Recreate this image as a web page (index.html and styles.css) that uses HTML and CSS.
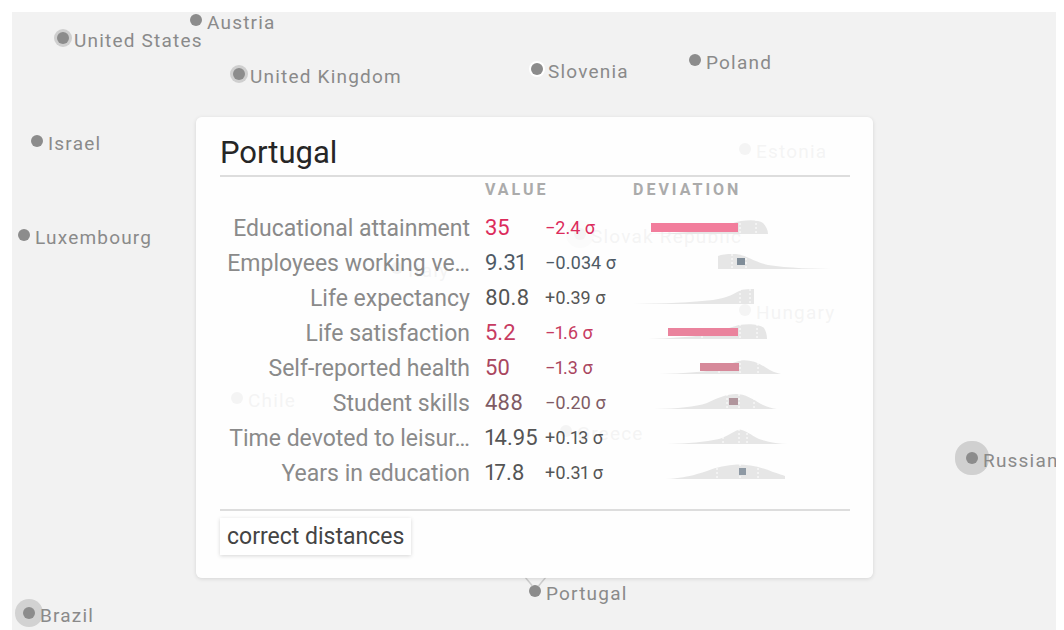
FILE: index.html
```html
<!DOCTYPE html>
<html lang="en">
<head>
<meta charset="utf-8">
<title>Portugal</title>
<link rel="stylesheet" href="styles.css">
</head>
<body>
<div class="page">
  <div class="map">
    <div class="pin" style="left:184px;top:8px"><span class="dot"></span><span class="name">Austria</span></div>
    <div class="pin" style="left:51px;top:26px"><span class="dot halo-s"></span><span class="name">United States</span></div>
    <div class="pin" style="left:227px;top:62px"><span class="dot halo-s"></span><span class="name">United Kingdom</span></div>
    <div class="pin" style="left:525px;top:57px"><span class="dot ring"></span><span class="name">Slovenia</span></div>
    <div class="pin" style="left:683px;top:48px"><span class="dot"></span><span class="name">Poland</span></div>
    <div class="pin" style="left:25px;top:129px"><span class="dot"></span><span class="name">Israel</span></div>
    <div class="pin" style="left:12px;top:223px"><span class="dot"></span><span class="name">Luxembourg</span></div>
    <div class="pin" style="left:733px;top:137px"><span class="dot"></span><span class="name">Estonia</span></div>
    <div class="pin" style="left:568px;top:222px"><span class="dot halo-m"></span><span class="name">Slovak Republic</span></div>
    <div class="pin" style="left:385px;top:256px"><span class="dot"></span><span class="name">Italy</span></div>
    <div class="pin" style="left:733px;top:298px"><span class="dot"></span><span class="name">Hungary</span></div>
    <div class="pin" style="left:225px;top:386px"><span class="dot"></span><span class="name">Chile</span></div>
    <div class="pin" style="left:554px;top:419px"><span class="dot"></span><span class="name">Greece</span></div>
    <div class="pin" style="left:960px;top:446px"><span class="dot halo-l"></span><span class="name">Russian Federation</span></div>
    <div class="pin" style="left:523px;top:579px"><span class="dot"></span><span class="name">Portugal</span></div>
    <div class="pin" style="left:17px;top:601px"><span class="dot halo-m"></span><span class="name">Brazil</span></div>

    <svg class="pointer" width="22" height="11" viewBox="0 0 22 11"><path d="M0,0 L7.5,9 M21,0 L13.5,9"/></svg>

    <div class="card">
      <h1 class="title">Portugal</h1>
      <div class="row head">
        <span></span>
        <span class="hcell">VALUE</span>
        <span></span>
        <span class="hcell">DEVIATION</span>
      </div>

      <div class="row">
        <span class="label">Educational attainment</span>
        <span class="val neg3">35</span>
        <span class="sig neg3">&minus;2.4 &sigma;</span>
        <svg class="chart" width="217" height="20" viewBox="0 0 217 20">
          <path class="dens" d="M15,16 C40,15.5 60,14 75,11.5 C88,9.5 98,5 108,3 C118,1.5 126,2 130,5 C133,8 135,12 135,16 Z"/>
          <path class="q" d="M107,1 V16 M123,1 V16"/>
          <rect class="bar b3" x="18" y="5" width="87" height="9"/>
        </svg>
      </div>

      <div class="row">
        <span class="label">Employees working ve…</span>
        <span class="val cool">9.31</span>
        <span class="sig cool">&minus;0.034 &sigma;</span>
        <svg class="chart" width="217" height="20" viewBox="0 0 217 20">
          <path class="dens" d="M85,16 L85,3 C90,1 100,0.5 106,1.5 C114,3 122,9 135,12 C155,15 180,16 209,16 Z"/>
          <path class="q" d="M99,1 V16 M113,1 V16"/>
          <rect class="mk-cool" x="104" y="5" width="8" height="7"/>
        </svg>
      </div>

      <div class="row">
        <span class="label">Life expectancy</span>
        <span class="val">80.8</span>
        <span class="sig">+0.39 &sigma;</span>
        <svg class="chart" width="217" height="20" viewBox="0 0 217 20">
          <path class="dens" d="M0,16 C30,15.5 60,14.5 80,12 C95,10 102,5 108,2 C112,1 116,1 121,1 L121,16 Z"/>
          <path class="q" d="M107,1 V16 M117,1 V16"/>
        </svg>
      </div>

      <div class="row">
        <span class="label">Life satisfaction</span>
        <span class="val neg2">5.2</span>
        <span class="sig neg2">&minus;1.6 &sigma;</span>
        <svg class="chart" width="217" height="20" viewBox="0 0 217 20">
          <path class="dens" d="M15,16 C35,15.5 55,14 72,12 C88,9 97,4 106,2 C116,0.5 126,1 131,5 C133,8 134,12 134,16 Z"/>
          <path class="q" d="M69,1 V16 M107,1 V16 M124,1 V16"/>
          <rect class="bar b2" x="35" y="5" width="70" height="8"/>
        </svg>
      </div>

      <div class="row">
        <span class="label">Self-reported health</span>
        <span class="val neg1">50</span>
        <span class="sig neg1">&minus;1.3 &sigma;</span>
        <svg class="chart" width="217" height="20" viewBox="0 0 217 20">
          <path class="dens" d="M26,16 C50,15.5 68,14 80,12 C92,9 100,4 108,2.5 C116,1.5 124,4 132,9 C138,13 143,15 148,16 Z"/>
          <path class="q" d="M86,1 V16 M107,1 V16 M125,1 V16"/>
          <rect class="bar b1" x="67" y="5" width="39" height="8"/>
        </svg>
      </div>

      <div class="row">
        <span class="label">Student skills</span>
        <span class="val neg0">488</span>
        <span class="sig neg0">&minus;0.20 &sigma;</span>
        <svg class="chart" width="217" height="20" viewBox="0 0 217 20">
          <path class="dens" d="M21,16 C45,15.5 62,14 74,10 C84,5 94,1 103,1 C112,1 120,6 128,11 C134,14 139,15.5 144,16 Z"/>
          <path class="q" d="M94,1 V16 M106,1 V16 M121,1 V16"/>
          <rect class="mk-warm" x="96" y="5" width="9" height="7"/>
        </svg>
      </div>

      <div class="row">
        <span class="label">Time devoted to leisur…</span>
        <span class="val">14.95</span>
        <span class="sig">+0.13 &sigma;</span>
        <svg class="chart" width="217" height="20" viewBox="0 0 217 20">
          <path class="dens" d="M34,16 C55,15.5 72,14 86,11 C96,8 102,2 107,1.5 C112,2 118,7 126,11 C136,14.5 146,16 155,16 Z"/>
          <path class="q" d="M90,1 V16 M106,1 V16 M114,1 V16"/>
        </svg>
      </div>

      <div class="row">
        <span class="label">Years in education</span>
        <span class="val">17.8</span>
        <span class="sig">+0.31 &sigma;</span>
        <svg class="chart" width="217" height="20" viewBox="0 0 217 20">
          <path class="dens" d="M32,16 C50,15.5 62,12 74,8 C84,4 94,2 104,1.5 C116,1.5 128,4 140,9 C146,11 150,12 152,13 L152,16 Z"/>
          <path class="q" d="M84,1 V16 M107,1 V16 M125,1 V16"/>
          <rect class="mk-cool2" x="106" y="5" width="7" height="7"/>
        </svg>
      </div>

      <div class="foot">
        <button class="btn" type="button">correct distances</button>
      </div>
    </div>
  </div>
</div>
</body>
</html>
```

FILE: styles.css
```css
html, body {
  margin: 0;
  background: #ffffff;
  overflow: hidden;
}

.page {
  padding: 12px 8px 0 12px;
}

.map {
  position: relative;
  height: 630px;
  background: #f2f2f2;
  overflow: hidden;
  font-family: Roboto, "Liberation Sans", sans-serif;
}

/* map pins */
.pin {
  position: absolute;
  display: flex;
  align-items: center;
  gap: 5px;
  height: 22px;
  transform: translate(-6px, -8px);
  white-space: nowrap;
}

.dot {
  width: 12px;
  height: 12px;
  border-radius: 50%;
  background: #8c8c8c;
  margin-bottom: 6px;
  flex: none;
}

.halo-s { box-shadow: 0 0 0 3px #cfcfcf; }
.halo-m { box-shadow: 0 0 0 8px #d2d2d2; }
.halo-l { box-shadow: 0 0 0 11px #d0d0d0; }
.ring { box-shadow: 0 0 0 2px #ffffff; }

.name {
  font-size: 19px;
  line-height: 22px;
  letter-spacing: 1.2px;
  color: #8a8a8a;
}

.pointer {
  position: absolute;
  left: 513px;
  top: 565px;
}

.pointer path {
  stroke: #cccccc;
  stroke-width: 1.5;
  fill: none;
}

/* tooltip card */
.card {
  position: absolute;
  left: 184px;
  top: 105px;
  width: 677px;
  box-sizing: border-box;
  padding: 18px 23px 23px 24px;
  background: rgba(255, 255, 255, 0.9);
  border-radius: 6px;
  box-shadow: 0 1px 4px rgba(0, 0, 0, 0.12);
}

.title {
  margin: 0;
  font-size: 31px;
  line-height: 36px;
  font-weight: 400;
  color: #262626;
  padding-bottom: 4px;
  border-bottom: 2px solid #dddddd;
}

.row {
  display: grid;
  grid-template-columns: 265px 60px 88px 217px;
  align-items: center;
  height: 35px;
}

.head {
  height: 20px;
  margin-top: 3px;
  margin-bottom: 10px;
}

.hcell {
  font-size: 16px;
  line-height: 20px;
  font-weight: 700;
  letter-spacing: 3px;
  color: #ababab;
}

.label {
  text-align: right;
  padding-right: 15px;
  padding-top: 2px;
  font-size: 23px;
  line-height: 33px;
  color: #8a8a8a;
  white-space: nowrap;
  overflow: hidden;
}

.val {
  font-size: 22px;
  line-height: 35px;
  color: #555555;
  font-variant-numeric: proportional-nums;
}

.sig {
  font-size: 18px;
  line-height: 35px;
  color: #555555;
  white-space: nowrap;
  font-variant-numeric: proportional-nums;
}

.neg3 { color: #dc2c5c; }
.neg2 { color: #c73b61; }
.neg1 { color: #a9465f; }
.neg0 { color: #7f5b64; }
.cool { color: #4e5a65; }

.chart {
  display: block;
}

.dens { fill: #e6e6e6; }

.q {
  stroke: #ffffff;
  stroke-width: 1;
  stroke-dasharray: 2 2;
  fill: none;
}

.bar.b3 { fill: #f27d9c; }
.bar.b2 { fill: #ea839d; }
.bar.b1 { fill: #d6899a; }
.mk-warm { fill: #b0959c; }
.mk-cool { fill: #7f8c98; }
.mk-cool2 { fill: #8e99a4; }

.foot {
  margin-top: 19px;
  border-top: 2px solid #dddddd;
  padding-top: 7px;
}

.btn {
  display: block;
  margin: 0;
  border: 0;
  background: #ffffff;
  box-shadow: 0 1px 4px rgba(0, 0, 0, 0.16);
  font-family: Roboto, "Liberation Sans", sans-serif;
  font-size: 23px;
  line-height: 37px;
  padding: 0 7px;
  color: #444444;
}
```
